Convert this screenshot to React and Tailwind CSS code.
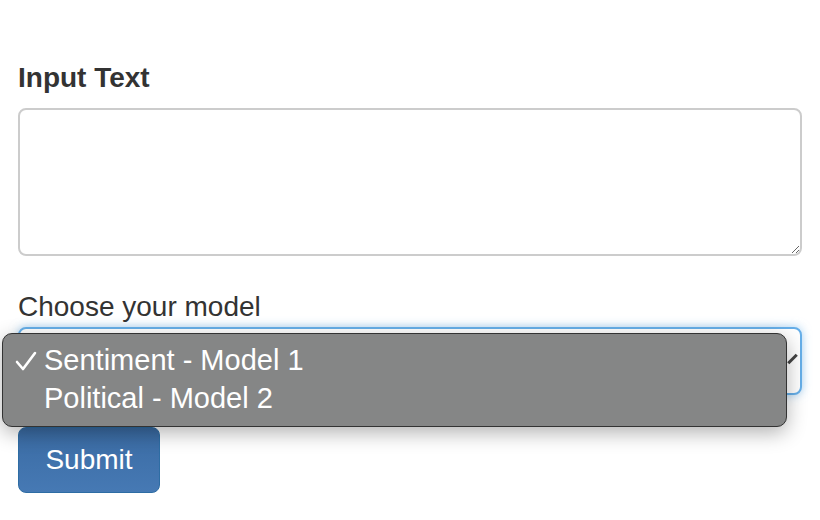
import React from 'react'

const App = () => {
  return (
    <div
      className="relative w-[820px] h-[520px] bg-white px-[18px] pt-[58px] text-[#333]"
      style={{ fontFamily: '"Liberation Sans", Arial, sans-serif' }}
    >
      {/* Input text */}
      <div className="mb-[31px]">
        <label className="block text-[28px] leading-[40px] font-bold mb-[10px]">Input Text</label>
        <textarea className="block w-[784px] h-[148px] border-2 border-[#cccccc] rounded-[8px] bg-white outline-none" />
      </div>

      {/* Model select */}
      <div className="relative mb-[32px]">
        <label className="block text-[28px] leading-[40px] mb-0">Choose your model</label>
        <div className="h-[68px] w-[784px] border-2 border-[#66afe9] rounded-[8px] bg-white shadow-[0_0_10px_rgba(102,175,233,0.6)] flex items-center justify-end pr-[6px]">
          <span className="block w-[3px] h-[12px] bg-[#444] rotate-45 mb-[4px]"></span>
        </div>
      </div>

      <button className="w-[142px] h-[66px] rounded-[8px] border border-[#2e6da4] bg-gradient-to-b from-[#3a6ba3] to-[#4679b4] text-white text-[28px] leading-[40px]">
        Submit
      </button>

      {/* Open native menu */}
      <div className="absolute left-[2px] top-[333px] w-[785px] h-[94px] rounded-[10px] border border-[#333333] bg-[#858686] shadow-[0_6px_20px_rgba(0,0,0,0.3)] text-white text-[29px] pt-[8px]">
        <div className="flex items-center h-[38px]">
          <span className="w-[41px] pl-[12px] flex items-center">
            <svg width="22" height="20" viewBox="0 0 22 20" fill="none">
              <path d="M2 11 L8 18 L20 2" stroke="white" strokeWidth="2.6" strokeLinecap="round" strokeLinejoin="round" />
            </svg>
          </span>
          <span>Sentiment - Model 1</span>
        </div>
        <div className="flex items-center h-[38px]">
          <span className="w-[41px]"></span>
          <span>Political - Model 2</span>
        </div>
      </div>
    </div>
  )
}

export default App
